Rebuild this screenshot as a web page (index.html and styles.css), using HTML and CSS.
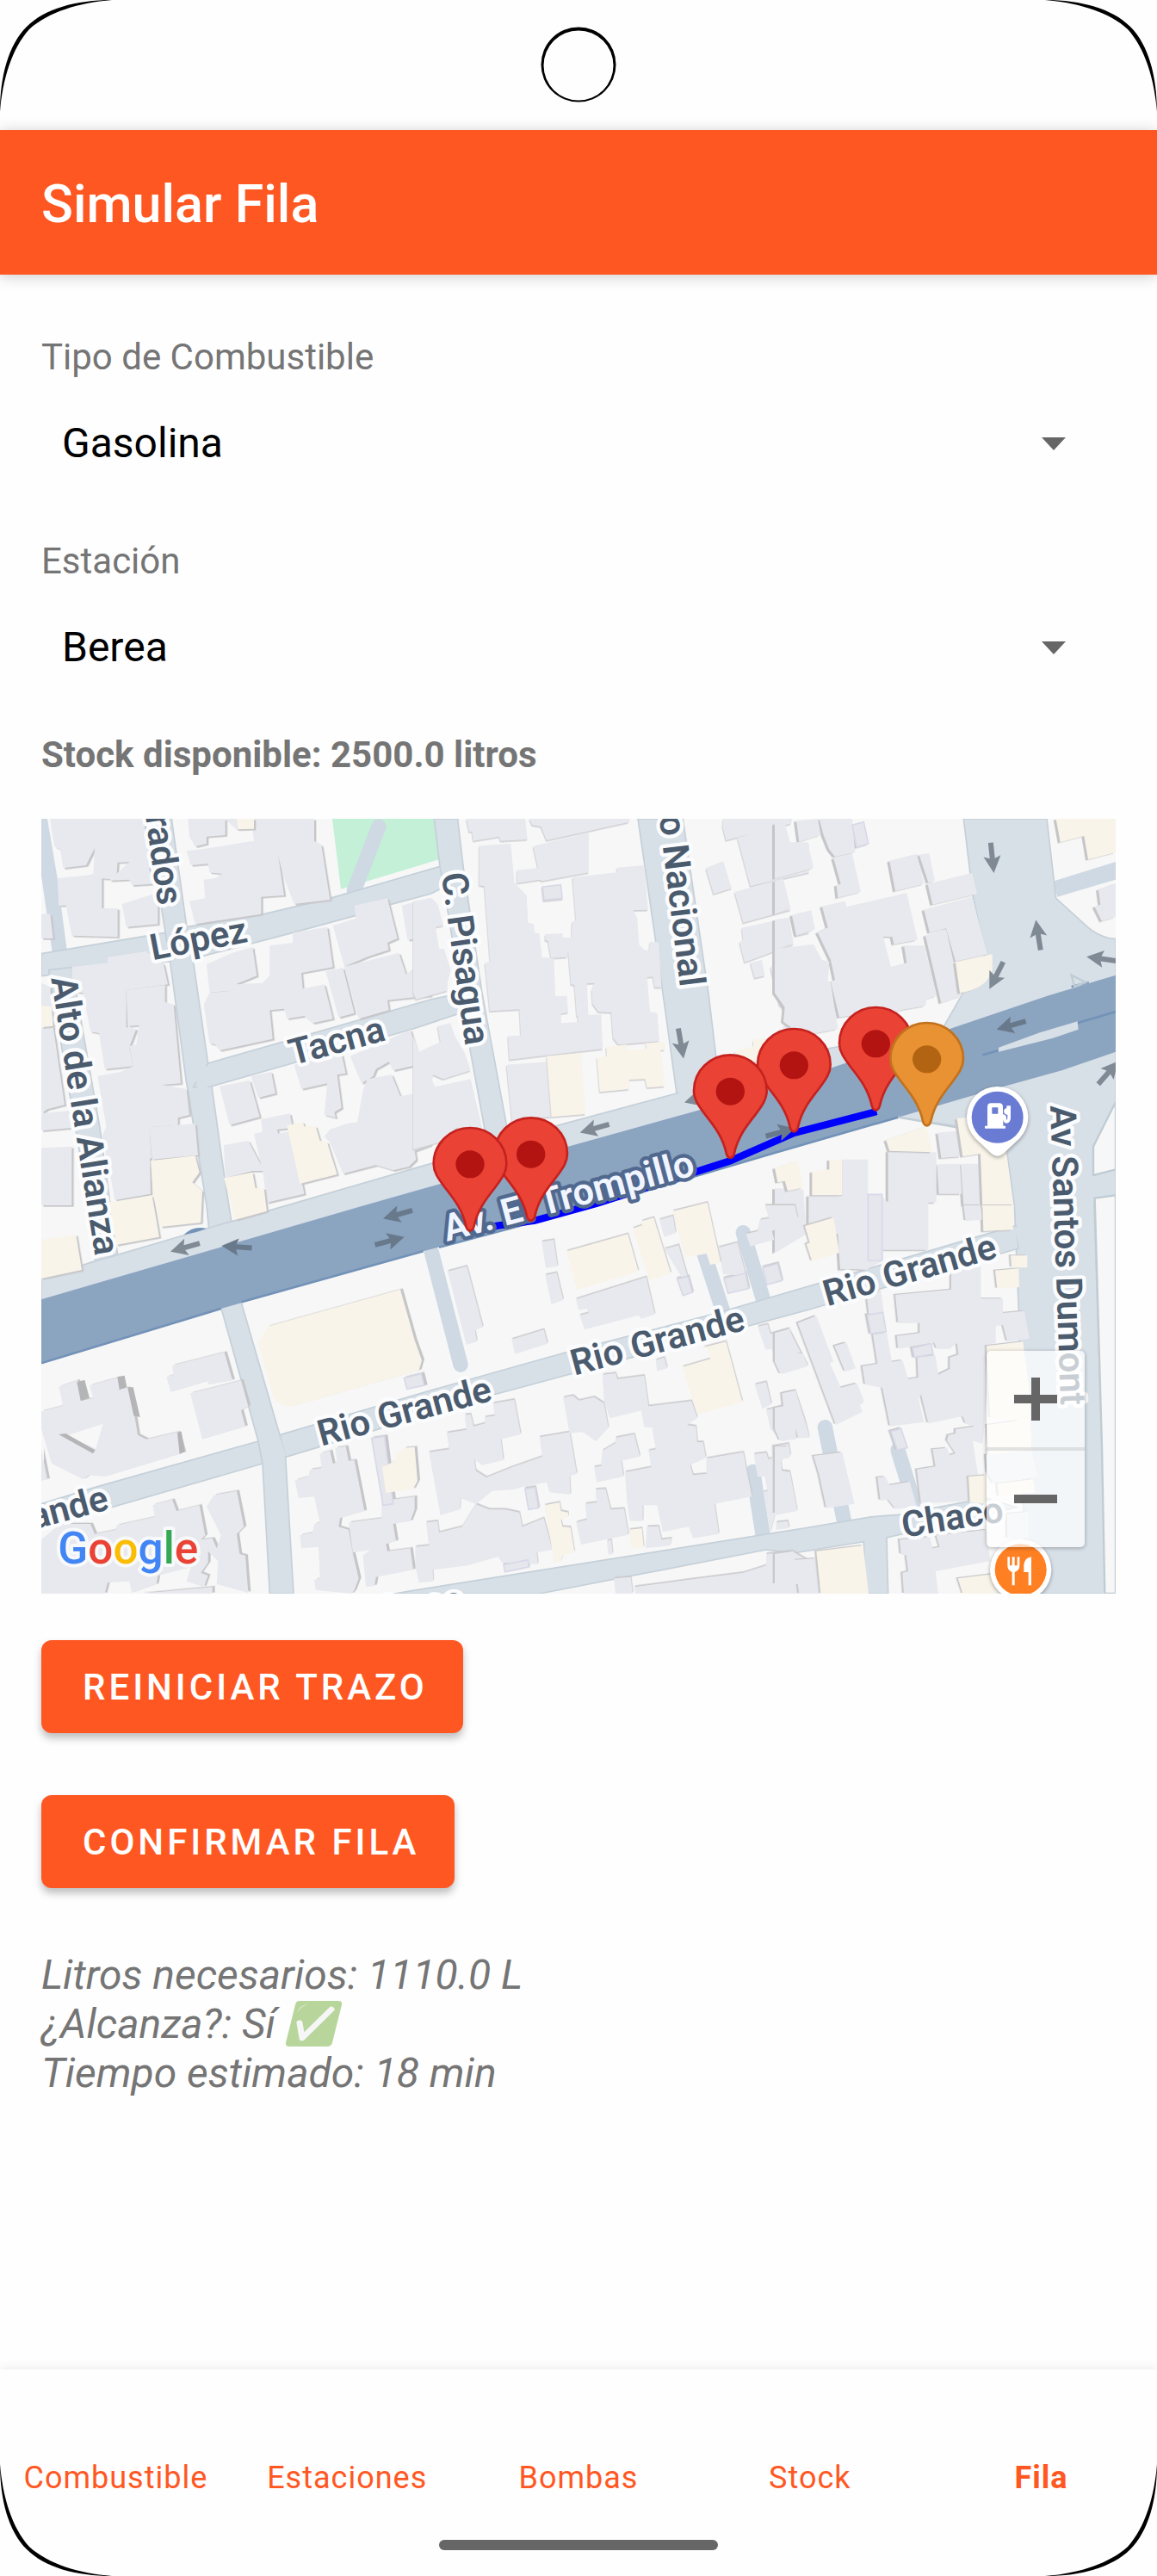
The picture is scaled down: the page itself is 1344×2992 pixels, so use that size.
FILE: index.html
```html
<!DOCTYPE html>
<html lang="es">
<head>
<meta charset="utf-8">
<meta name="viewport" content="width=device-width, initial-scale=1">
<title>Simular Fila</title>
<link rel="stylesheet" href="styles.css">
</head>
<body>
<div class="screen">
  <svg class="corner corner-tl" viewBox="0 0 130 130" aria-hidden="true"><path d="M0 130C0 88 10 52 31 31C52 10 88 0 130 0C92 3 56 14 34 34C14 56 3 92 0 130z"/></svg>
  <svg class="corner corner-tr" viewBox="0 0 130 130" aria-hidden="true"><path d="M0 130C0 88 10 52 31 31C52 10 88 0 130 0C92 3 56 14 34 34C14 56 3 92 0 130z"/></svg>
  <svg class="corner corner-bl" viewBox="0 0 130 130" aria-hidden="true"><path d="M0 130C0 88 10 52 31 31C52 10 88 0 130 0C92 3 56 14 34 34C14 56 3 92 0 130z"/></svg>
  <svg class="corner corner-br" viewBox="0 0 130 130" aria-hidden="true"><path d="M0 130C0 88 10 52 31 31C52 10 88 0 130 0C92 3 56 14 34 34C14 56 3 92 0 130z"/></svg>

  <div class="status-bar">
    <svg class="camera" viewBox="0 0 176 176" aria-hidden="true"><path fill-rule="evenodd" d="M88 1a87 87 0 1 0 0 174a87 87 0 1 0 0-174zM88 9a81 81 0 1 1 0 162a81 81 0 1 1 0-162z"/></svg>
  </div>

  <header class="app-bar"><h1 class="app-title">Simular Fila</h1></header>

  <main class="content">
    <div class="field">
      <label class="field-label" for="tipo">Tipo de Combustible</label>
      <div class="spinner">
        <select id="tipo" class="spinner-select"><option>Gasolina</option></select>
        <svg class="spinner-arrow" viewBox="0 0 28 15" aria-hidden="true"><path d="M0 0h28L14 15z"/></svg>
      </div>
    </div>
    <div class="field">
      <label class="field-label" for="estacion">Estación</label>
      <div class="spinner">
        <select id="estacion" class="spinner-select"><option>Berea</option></select>
        <svg class="spinner-arrow" viewBox="0 0 28 15" aria-hidden="true"><path d="M0 0h28L14 15z"/></svg>
      </div>
    </div>
    <p class="stock">Stock disponible: 2500.0 litros</p>

    <div class="map">
      <svg class="map-canvas" viewBox="0 0 3744 2700" role="img" aria-label="Mapa de la fila en Av. El Trompillo">
        <defs>
          <path id="arrow" d="M-53-9H2L-6-30L53 0L-6 30L2 9H-53z"/>
          <g id="pin">
            <path d="M0 231C-10 231-12 223-14 215C-26 158-58 118-88 80C-112 48-127 27-127-2A127 125 0 0 1 127-2C127 27 112 48 88 80C58 118 26 158 14 215C12 223 10 231 0 231z" stroke-width="8"/>
          </g>
        </defs>

        <!-- park and footpaths -->
        <path class="park" d="M1014 0H1374L1386 142L1044 245z"/>
        <path class="walk" d="M1176 27L1090 250"/>
        <path class="walk" d="M1360 1510L1461 1902"/>
        <path class="walk" d="M2446 1442L2520 1690M2308 1510L2375 1715M2480 2275L2515 2500M2731 2120L2800 2460"/>
        <path class="walk" d="M2985 2200L3040 2380"/>
        <path class="lane" d="M3525 218L3744 150V212L3541 272z"/>
        <path class="lane" d="M0 0H21L56 207L89 457L38 464L0 197z"/>

        <!-- side streets -->
        <g class="street">
          <path d="M0 470L431 397L506 377L776 332L1006 277L1386 167L1450 180L1406 237L1356 262L1216 299L1096 337L876 397L531 487L0 548z"/>
          <path d="M26 527L106 517L204 1077L238 1327L266 1520L191 1560L151 1267L66 767z"/>
          <path d="M378 0H454L506 372L531 507L581 852L594 932L641 1267L666 1425L586 1450L576 1347L504 907L446 477L421 327z"/>
          <path d="M581 852L1356 630L1461 607L1500 660L1461 677L1296 732L594 932L530 935z"/>
          <path d="M1369 0H1451L1471 172L1536 607L1623 1077L1640 1200L1550 1220L1546 1087L1491 787L1406 257L1389 167z"/>
          <path d="M2079 0H2236L2266 207L2326 617L2351 827L2366 960L2200 1010L2214 957L2141 427z"/>
          <path d="M3214 0H3504L3536 277L3646 377Q3690 415 3744 419V987L3666 1142V1242L3744 1222V1312L3671 1322L3669 1347L3696 2187L3706 2700H3430L3406 1712L3391 1347L3366 1167L3196 1072L2986 1040L3146 722L3206 617L3290 470L3246 267z"/>
          <path d="M0 1602L191 1540L266 1519L586 1425L666 1402L1356 1202L1786 1072L2214 957L2736 802L3146 722L3206 950L0 1760z"/>
          <path d="M0 2387L196 2327L756 2169L831 2147L1356 1992L1836 1857L2356 1722L3396 1417L3406 1497L2676 1710L1576 2007L851 2224L771 2247L0 2470z"/>
          <path d="M626 1702L696 1682L831 2147L851 2224L879 2700H796L771 2247L756 2169z"/>
          <path d="M1296 2689L2676 2469L2896 2432L2986 2425L3291 2367L3400 2400L2946 2505L2951 2700H2871L2866 2519L2621 2559L2526 2547L1736 2700H1230z"/>
        </g>
        <!-- crossings without kerb lines -->
        <path class="median" d="M452 400L508 385L526 488L462 500zM535 870L588 860L598 925L545 950zM770 2173L832 2155L852 2220L780 2240zM1412 200L1470 185L1478 250L1420 250zM1455 615L1532 600L1540 660L1480 690zM592 1425L662 1408L670 1450L600 1460zM1556 1130L1620 1115L1630 1160L1562 1170zM2218 930L2358 900L2366 990L2226 990zM3392 1425L3460 1405V1500L3408 1495zM3210 640L3300 480L3400 700L3200 740z"/>
        <path class="block" d="M3744 987L3666 1142V1242L3744 1222zM3671 1322L3744 1312V2700H3706L3696 2187z"/>

        <!-- avenue -->
        <path class="avenue" d="M0 1675L226 1609L1126 1347L1356 1282L1836 1142L2286 1017L2756 867L3166 732L3506 617L3744 545V812L3556 877L3356 932L2986 1040L2556 1164L1936 1347L1331 1507L626 1707L0 1897z"/>
        <path class="avenue-edge" d="M0 1897L626 1707M698 1684L1331 1507M1386 1493L1936 1347L2556 1164L2986 1040M3280 823L3335 808M3590 585L3650 570M3611 712L3744 672"/>
        <path class="avenue-spot" d="M496 1450Q530 1416 576 1428L540 1440z"/>
        <path class="median" d="M3336 797L3480 745L3611 706L3614 734L3526 764L3336 812z"/>
        <path class="street-line" d="M2986 1040L3190 1075"/>
        <path class="street-line" d="M3590 545L3640 570L3600 584z"/>

        <!-- tile 1: north west blocks -->
        <g class="buildings shade-se" transform="translate(-24 -33)">
          <path d="M55 33H380L400 180L290 185L285 245L165 235L205 225L210 135L180 195L100 205L90 140L70 130L60 75z"/>
          <path d="M80 240L235 225V345H290V445L130 440L110 335H85zM335 180L395 180L410 260L340 265L330 245L260 248zM305 330L430 290V400L320 410zM24 365H55L65 450H24z"/>
          <path d="M535 33H665V90L600 95V120L560 130L540 95zM665 33H975V110L1000 125L1030 315L905 330L870 240L850 165L770 170L760 65L705 70z"/>
          <path d="M530 145L610 135L760 110L850 165L870 300L790 305V365L560 400L540 320L595 310L590 245L630 240L655 225L610 220L605 190L545 195z"/>
          <path d="M130 550L255 535V515L390 495L450 540L465 610L320 630L320 760L355 765L330 830L345 895L245 905L225 780L195 775L170 640L135 635z"/>
          <path d="M320 630L455 612V672L485 680L510 955L445 960L530 975L540 1065L500 1075V1100L400 1108L408 1215L275 1250L220 930L300 915L345 895L330 825L355 820L365 750H400L325 755z"/>
          <path d="M400 1108L560 1095L570 1205L410 1220zM250 1108L400 1108L405 1340L280 1362L260 1250L235 1140zM24 760L65 755L105 1030L45 1045L24 1060zM24 1060L120 1050L130 1110L24 1120zM24 1180L130 1175L130 1380H24zM24 605L55 620L60 690H24z"/>
          <path d="M600 540L690 500L760 480L775 580L705 608L710 630L610 638zM820 475L900 465V430L1020 410L1040 550L930 570L935 625L1010 610L1040 730L970 745L940 720L880 730L870 695L820 700L830 800L740 820L645 840L630 820L610 815L590 680L610 640L705 630V610L795 605L820 580z"/>
          <path d="M1040 405L1120 380L1115 335L1230 310L1265 450L1230 465L1235 490L1165 512L1080 548zM1280 335L1380 308V445L1300 455zM1015 565L1075 552L1115 710L1060 725zM1080 548L1270 500L1295 575L1380 510V650L1325 655L1230 665L1235 700L1130 730z"/>
          <path d="M645 965L750 945L785 1072L680 1100zM755 930L825 915L840 990L780 1005zM905 890L1070 850L1085 920L1055 925L1070 1040L1045 1055L1050 1075L1010 1065L1020 955L930 975zM1100 860L1310 768L1335 850L1380 840V880L1250 910L1235 880L1190 905L1180 930L1140 955z"/>
          <path d="M1160 940L1245 925L1275 1000L1355 985L1380 1100V1170L1325 1190L1330 1220L1305 1245L1250 1258L1190 1240L1075 1270L1030 1160L1010 1140L1030 1115L1090 1095L1125 1090L1145 980z"/>
          <path d="M765 1130L845 1115L850 1130L900 1120L940 1340L810 1370L795 1260L760 1260L665 1285L660 1170L745 1155L790 1240zM790 1080L890 1060L900 1110L850 1115L795 1130z"/>
        </g>
        <g class="shops shade-se" transform="translate(-24 -33)">
          <path d="M705 33H765V68L710 70zM24 685L60 688L65 755L24 760zM405 1225L560 1207L575 1265L550 1300L585 1330L580 1440L440 1455L415 1350zM260 1370L410 1345L435 1490L285 1518zM660 1285L760 1265L770 1320L800 1320L810 1400L700 1430zM880 1102L935 1090L940 1105L980 1105L995 1155L1020 1160L1055 1272L925 1305zM24 1500L145 1482L165 1605L24 1635z"/>
        </g>

        <!-- tile 2: north centre blocks -->
        <g class="buildings shade-s" transform="translate(1296 -33)">
          <path d="M185 33H390L398 105L305 110L300 95L210 110L205 78H195zM405 33H755L750 45L465 108L445 60L415 55zM418 128L612 80V220L530 235L450 250L440 245L362 257V212L435 205z"/>
          <path d="M230 127L340 120L352 255L395 300L400 395L420 400L422 430L440 432L448 515L490 520L495 650L535 650L540 708L515 712V745L575 742L573 718L655 715L660 835L585 843L335 872L330 790L375 788L370 697L267 703L250 535L268 532L248 268L230 265z"/>
          <path d="M555 237L710 220V203L805 195L818 350L765 352L780 375L787 472L805 490L822 492L825 462L855 462L865 620L842 620L835 583L815 585L825 705L850 710L857 808L715 820L697 797L690 708L645 705L625 677L622 630L632 605L605 607L610 718L570 720L562 612L550 610L540 495L535 515L480 518L470 460L460 455V435L520 432V447L552 447L553 392L567 387z"/>
          <path d="M325 890L465 880L482 1072L430 1075L345 1090z"/>
          <path d="M0 320L65 310L85 330L105 405L78 410L90 485L108 487L130 560L120 595L118 632L10 662L0 640zM85 755L130 745L145 790L180 850L200 910L105 940L70 925L65 940L75 967L200 940L240 1110L150 1110L90 1160L0 1185V790L20 845L95 810zM0 885L45 877L55 915L0 930z"/>
          <path d="M1080 33H1320L1315 50L1090 108L1078 60zM1130 100L1295 50L1315 120L1340 115L1380 120V220L1175 268zM1020 205L1080 180L1110 275L1047 295zM1120 288L1285 243L1315 350L1150 395zM1145 413L1310 377L1325 470L1155 533L1137 462L1150 455zM1315 370L1380 355V430L1330 442zM1175 535L1215 525L1225 580L1190 588zM1245 550L1380 475V780L1290 770L1300 730L1285 690L1275 680z"/>
          <path class="outline" d="M451 270L514 263L519 310L456 316z"/>
        </g>
        <g class="shops shade-s" transform="translate(1296 -33)">
          <path d="M465 860L583 850L600 1062L482 1072zM672 828L742 820L745 840L812 835V815L875 810V838L862 840L875 965L815 970L808 940L752 942V975L650 985L640 865L675 860zM1118 843L1185 825V803L1245 795L1235 860L1140 900z"/>
        </g>

        <!-- tile 3: north east blocks -->
        <g class="buildings shade-sw" transform="translate(2556 -33)">
          <path d="M0 50L35 45L45 115L115 115L135 205L0 242zM75 40L150 33L160 90L85 113zM155 33H270L280 150L210 165L190 140L170 90zM205 170L270 155L300 288L220 308L215 265L230 260zM0 250L30 243L55 345L0 365zM60 370L127 352L140 418L75 440z"/>
          <path d="M400 180L495 155L520 260L420 285zM503 158L538 153L558 250L535 255zM533 260L688 222L705 295L550 332zM520 350L688 305L740 505L630 530L597 415L540 430zM525 440L597 418L650 650L580 675zM165 338L245 320L250 340L460 292L498 455L415 470L410 445L378 443L405 550L460 535L450 475L520 475L565 650L530 660L525 685L440 700L375 720L350 705L225 725L195 600L210 595L195 525L150 430L185 412z"/>
          <path d="M0 385L45 377L65 465L15 485L135 470L165 525L190 530L185 600L195 605L220 765L100 790L30 740L35 690L0 640zM1128 280L1188 258V375L1140 390L1115 340L1135 332z"/>
          <path d="M568 1127L645 1120L650 1210L580 1215zM395 1190L563 1195V1370H395zM565 1237L645 1235L652 1340H572zM648 1235L710 1235L718 1380H658zM235 1220H325V1345L375 1350L390 1367L535 1370V1535H378V1570L320 1605L290 1603H228L220 1480L118 1470V1345L235 1348zM0 1320L100 1325L110 1480L0 1545z"/>
          <path class="outline" d="M270 55L310 44L326 120L285 132z"/>
          <path class="outline" d="M325 1342H374V1572H325z"/>
        </g>
        <g class="shops shade-sw" transform="translate(2556 -33)">
          <path d="M980 33H1188V150L1092 175L1078 93L995 115zM630 533L758 505V560Q740 625 645 640zM388 1153L528 1103L550 1195L400 1190zM635 1077L710 1070L718 1200L655 1210zM715 1150L805 1180L830 1380V1465L727 1470zM0 1250L80 1225L100 1318L45 1330L35 1295L10 1300zM130 1262L190 1255V1220L235 1220V1345H130z"/>
        </g>

        <!-- tile 4: south west blocks -->
        <g class="buildings shade-ne" transform="translate(-24 1347)">
          <path d="M85 632L150 610L165 680L205 672L192 628L290 600L300 640L325 635L350 740L360 800L390 815L500 790L520 862L245 945L190 940L170 955L60 900L24 780V718L100 698zM480 558L662 512L690 610L605 625L605 612L475 650L460 598L485 590zM543 655L720 610L745 700L720 715L735 770L585 815zM24 850L45 955L24 960z"/>
          <path d="M412 1045L480 1025L495 1065L575 1045L595 1150L580 1165L620 1160L635 1195L650 1150L600 1050L625 1010L705 995L730 1120L705 1145L715 1215L735 1220L745 1350L635 1320L640 1240L605 1205V1245L580 1280L605 1290L590 1330L530 1310L545 1260L430 1290L425 1320L340 1350L330 1310L255 1315L245 1353H24V1165L90 1110L195 1110L210 1145L285 1130V1115L420 1085z"/>
          <path d="M908 958L955 945L960 920L1000 915L995 865L1030 855L1040 900L1055 895L1048 845L1085 840L1095 890L1115 888L1150 1065L1065 1090L1060 1120L1095 1130L1110 1215L1130 1300L1115 1340L1105 1353L980 1340L975 1305L995 1300L990 1190L930 1195L925 1150L970 1140L975 1110L995 1105L975 1015L920 1020zM1095 1105L1210 1090V1030L1325 1015V1060L1310 1100L1250 1110L1260 1170L1225 1180L1230 1205L1310 1195L1320 1270L1190 1295L1185 1325L1155 1330L1145 1220L1170 1200L1110 1210zM370 1353L620 1330V1353z"/>
          <path class="outline" d="M1175 812L1220 805L1250 1040L1215 1045zM1288 602L1348 587L1358 627L1298 640z"/>
        </g>
        <g class="shops shade-ne" transform="translate(-24 1347)">
          <path d="M812 422L1275 293L1325 470L1350 540L1340 575L890 702Q840 695 830 660L780 480zM1212 912L1258 890V870L1290 845L1325 842L1335 960L1320 988L1225 1002z"/>
        </g>
        <path class="hollow" d="M85 2150L215 2108L190 2195z"/>
        <path class="wall" d="M60 2145L85 2142L188 2200L180 2212z"/>
        <path class="wall" d="M124 1963L151 1955L168 2019L137 2028zM265 1945L290 1940L298 1980L272 1990zM301 1982L320 1980L344 2085L322 2080zM474 2140L488 2135L500 2205L482 2214z"/>

        <!-- tile 5: south centre blocks -->
        <g class="buildings shade-n" transform="translate(1296 1347)">
          <path d="M120 230L187 212L243 425L215 435L222 475L185 486zM448 127L490 120L503 212L462 218zM460 243L500 235L523 330L482 345zM343 467L455 433L468 482L355 518zM567 327L812 250L842 380L795 395L785 383L597 433L580 383L612 375L605 360L577 365zM858 50L905 37L915 97L875 110zM875 152L925 138L955 245L935 250zM1063 147L1130 130L1160 245L1080 240zM1160 100L1200 90L1210 50L1240 45L1225 0L1330 0L1340 45L1250 90L1258 120L1175 143z"/>
          <path d="M845 540L875 530L885 568L850 578zM1200 422L1235 415L1245 448L1308 430L1375 560L1285 588L1248 500L1228 503zM1190 625L1230 615L1248 692L1217 710zM1285 655L1330 645L1365 750L1380 810L1345 810L1333 775L1335 810L1285 823L1245 780L1230 713L1290 698zM1340 412L1380 398V520z"/>
          <path d="M523 670L557 663L577 680L630 668L665 690L680 775L637 822L590 790L545 795zM660 590L705 585L712 605L805 593L820 700L970 682L990 740L955 765L985 770L990 825L1010 825L1020 880L965 905L975 940L1022 935V882L1150 860L1180 1015L1050 1040L1065 1145L975 1160L960 1120L870 1138L850 1045L800 1045V1100H755L745 1030L738 930L830 912L820 855L845 850L833 775L805 773L795 715L685 742L665 680z"/>
          <path d="M440 808L545 790L570 935L545 945L548 1008L475 1000L465 965L385 980L350 990L275 995L220 1040L170 1120L90 1140L85 1100L45 1105L55 1185L8 1190V1260L20 1315L70 1310L68 1270L190 1255L295 1225L310 1245L435 1250L430 1210L485 1200L455 1090L380 1120L370 1070L320 1060L265 1060L165 1020L163 1060L95 1080L55 860L125 850L117 793L185 782L180 730L200 728L210 770L250 760V738L285 733L278 690L352 677L375 798L305 815L315 888L240 905L212 885L218 925L255 948L345 912L450 875z"/>
          <path d="M660 855L705 828V810L770 797L790 875L725 890L733 945L640 965L630 912L655 908zM635 990L670 988L688 1060L735 1057L750 1148L585 1182L568 1105L605 1095L600 1040L640 1035zM815 1120L855 1118L865 1165L900 1160L895 1185L810 1195zM675 1170L690 1165L695 1215L680 1217z"/>
          <path d="M1187 867L1230 862L1238 885L1250 880L1248 840L1308 830L1315 872L1280 890L1285 925L1312 928L1338 1065L1260 1080L1245 1140L1220 1000L1235 995L1225 945L1200 945zM700 1300L758 1295L765 1353H705zM770 1330L955 1305L1150 1280L1230 1255V1215L1320 1205L1380 1240V1353H775zM1265 1105L1305 1100L1310 1125L1265 1130z"/>
          <path class="outline" d="M920 257L958 248L973 303L940 314zM1083 255L1158 237L1169 290L1097 307zM1218 217L1270 203L1285 262L1232 277zM390 988L424 983L437 1054L402 1060zM315 1252L400 1235L403 1260L320 1277z"/>
        </g>
        <g class="shops shade-n" transform="translate(1296 1347)">
          <path d="M535 160L748 100L785 230L570 295zM765 80L797 70V55L838 43L898 237L823 260zM905 20L1025-10L1072 200L1035 207L1022 168L948 182zM938 563L1035 535L1028 500L1010 495L1090 475L1147 685L990 730zM458 1045L510 1035L515 1065L540 1070V1085L515 1095L520 1120L548 1122L562 1208L520 1220L515 1240L492 1245zM753 1130L797 1125L803 1192L762 1197z"/>
        </g>

        <!-- tile 6: south east blocks -->
        <g class="buildings shade-nw" transform="translate(2556 1347)">
          <path d="M658 0H718L722 50L665 55zM80 410L145 385L205 545L192 550L230 635L287 620L312 685L297 695L305 720L213 765zM0 445L52 430L80 515L98 517L115 560L20 588L0 545zM208 490L250 478L282 568L245 580zM322 330L370 295L380 375L328 378zM342 450L390 443L408 545L358 552zM305 560L445 540L465 605L500 600L497 530L560 522L570 590L610 570V530L640 520L635 480L610 500H565L555 478L430 500L425 455L505 445V410H430L420 312L615 293V212H718V325H795V375L870 368L887 465L810 475L795 417L770 420V480L740 485V640L725 830L690 820L705 920L720 980L680 940L675 1030L510 1040L495 920L560 910L550 850L600 845L610 870L630 865L600 820L605 800L630 795V780L695 770L665 760L655 735L535 760L510 660L500 670L520 755L402 770L375 635L315 625z"/>
          <path d="M135 873L235 860L278 1040L180 1055L155 940zM358 948L385 945L400 975L470 963L495 1050L420 1058L395 1025L368 1028zM25 655L72 645L100 740L122 808L82 812L72 775L75 815L18 820L0 780V705L30 700zM0 840H48L52 880L20 885L25 925L52 930L78 1060L0 1075zM0 1215L65 1205L70 1235L145 1230L160 1353H85L80 1320H0zM435 1165L540 1155L550 1195L575 1190L562 1150L740 1130L750 1240L560 1275L570 1353H450L445 1280L465 1275L458 1220L440 1215zM735 870L895 850L915 945L760 970L740 930zM810 1075L885 1068V1160H810z"/>
          <path class="outline" d="M323 382L377 373L388 440L335 447zM405 788L440 778L462 845L427 852zM480 497L545 482L552 518L487 530z"/>
        </g>
        <g class="shops shade-nw" transform="translate(2556 1347)">
          <path d="M105 72L205 43L225 165L130 195L110 135L122 130zM722 0H833V5L725 10zM822 175H880V217H825zM768 227L850 220L852 285L775 290zM738 490L865 475L887 650L890 750L895 850L745 870L740 765L850 750L750 740zM775 970L900 955L908 1000L780 1015zM675 945L738 940V1040L680 1035zM145 1205L308 1185L327 1353H160zM638 1300L760 1285L770 1353H655z"/>
        </g>

        <!-- queue line -->
        <path class="route" d="M1494 1442L1590 1418L1720 1400L1936 1340L2401 1192L2623 1095L2911 1020"/>

        <!-- one way arrows -->
        <g class="arrows">
          <use href="#arrow" transform="translate(1928 1079) rotate(164)"/>
          <use href="#arrow" transform="translate(2229 783) rotate(80)"/>
          <use href="#arrow" transform="translate(2292 974) rotate(164)"/>
          <use href="#arrow" transform="translate(501 1494) rotate(164)"/>
          <use href="#arrow" transform="translate(3314 136) rotate(84)"/>
          <use href="#arrow" transform="translate(3474 405) rotate(261)"/>
          <use href="#arrow" transform="translate(3328 546) rotate(117)"/>
          <use href="#arrow" transform="translate(3695 488) rotate(188)"/>
          <use href="#arrow" transform="translate(3718 885) rotate(311)"/>
        </g>
        <g class="arrows arrows-avenue">
          <use href="#arrow" transform="translate(2576 1092) rotate(345)"/>
          <use href="#arrow" transform="translate(681 1492) rotate(184)"/>
          <use href="#arrow" transform="translate(1242 1379) rotate(164)"/>
          <use href="#arrow" transform="translate(1214 1471) rotate(345)"/>
          <use href="#arrow" transform="translate(3380 720) rotate(164)"/>
        </g>

        <!-- street names -->
        <g class="names">
          <text transform="translate(388 493) rotate(-11)">López</text>
          <text transform="translate(876 859) rotate(-15)">Tacna</text>
          <text transform="translate(407 304) rotate(82)" text-anchor="end">rados</text>
          <text transform="translate(34 556) rotate(81)">Alto de la Alianza</text>
          <text transform="translate(1394 193) rotate(82)">C. Pisagua</text>
          <text transform="translate(2226 588) rotate(83)" text-anchor="end">o Nacional</text>
          <text transform="translate(3516 1000) rotate(88)">Av Santos Dumont</text>
          <text transform="translate(976 2186) rotate(-15)">Rio Grande</text>
          <text transform="translate(1858 1940) rotate(-15)">Rio Grande</text>
          <text transform="translate(2739 1699) rotate(-16)">Rio Grande</text>
          <text transform="translate(240 2405) rotate(-15)" text-anchor="end">ande</text>
          <text transform="translate(3005 2504) rotate(-9)">Chaco</text>
          <text transform="translate(1478 2759) rotate(-9)" text-anchor="end">Chaco</text>
          <text class="avenue-name" transform="translate(1413 1473) rotate(-15)">Av. El Trompillo</text>
        </g>

        <!-- places -->
        <g transform="translate(3332 1040)">
          <path class="poi" d="M0 135C-12 135-20 128-30 118L-78 73A107 107 0 1 1 78 73L30 118C20 128 12 135 0 135z"/>
          <circle r="90" fill="#6a7bd4"/>
          <path fill="#fff" fill-rule="evenodd" d="M-44 39V30H-35V-36Q-35-49-22-49H6Q19-49 19-36V-10Q31-10 31 4V10Q35 8 35 2V-8Q22-10 22-22Q24-31 32-32V-40H46V4Q44 21 31 21Q21 20 20 6V30H28V39zM-19-34V-12H2V-34z"/>
        </g>
        <g transform="translate(3413 2617)">
          <circle class="poi" r="107"/>
          <circle r="90" fill="#ff8022"/>
          <path fill="#fff" d="M-46-45h8v30h8v-30h9v30h9v-30h8v30q0 18-17 23v46h-9v-46q-16-5-16-23zM37-45v99h-10V8H11v-25q2-24 26-28z"/>
        </g>

        <!-- markers -->
        <g class="pins">
          <use href="#pin" x="2908" y="784"/>
          <use href="#pin" x="2623" y="859"/>
          <use href="#pin" x="2401" y="950"/>
          <use href="#pin" x="1706" y="1169"/>
          <use href="#pin" x="1494" y="1204"/>
        </g>
        <g class="pin-dots">
          <ellipse cx="2908" cy="784" rx="50" ry="48"/>
          <ellipse cx="2623" cy="859" rx="50" ry="48"/>
          <ellipse cx="2401" cy="950" rx="50" ry="48"/>
          <ellipse cx="1706" cy="1169" rx="50" ry="48"/>
          <ellipse cx="1494" cy="1204" rx="50" ry="48"/>
        </g>
        <use class="pin-station" href="#pin" x="3086" y="838"/>
        <ellipse cx="3086" cy="838" rx="50" ry="48" fill="#b36412"/>

        <text class="logo" x="58" y="2594"><tspan fill="#4285f4">G</tspan><tspan fill="#ea4335">o</tspan><tspan fill="#fbbc04">o</tspan><tspan fill="#4285f4">g</tspan><tspan fill="#34a853">l</tspan><tspan fill="#ea4335">e</tspan></text>
      </svg>
      <div class="zoom">
        <button class="zoom-btn" type="button" aria-label="Acercar"><svg viewBox="0 0 50 50" aria-hidden="true"><path d="M20 0h10v20h20v10H30v20H20V30H0V20h20z"/></svg></button>
        <button class="zoom-btn" type="button" aria-label="Alejar"><svg viewBox="0 0 50 50" aria-hidden="true"><path d="M0 20h50v10H0z"/></svg></button>
      </div>
    </div>

    <div class="actions">
      <button class="action" type="button">REINICIAR TRAZO</button>
      <button class="action" type="button">CONFIRMAR FILA</button>
    </div>

    <p class="result">Litros necesarios: 1110.0 L<br>¿Alcanza?: Sí <svg class="check" viewBox="0 0 65 60" preserveAspectRatio="none" role="img" aria-label="correcto"><path fill="#b8d69b" d="M16 0H61Q66 0 65 5L54 55Q53 60 48 60H4Q-1 60 0 55L11 5Q12 0 16 0z"/><path fill="#cde3b7" d="M13 16Q15 5 26 4Q18 8 13 16z"/><path fill="none" stroke="#f6f6f6" stroke-width="7" stroke-linecap="round" stroke-linejoin="round" d="M16 29L19 49L53 11"/></svg><br>Tiempo estimado: 18 min</p>
  </main>

  <nav class="bottom-nav">
    <div class="tabs">
      <a class="tab" href="#combustible">Combustible</a>
      <a class="tab" href="#estaciones">Estaciones</a>
      <a class="tab" href="#bombas">Bombas</a>
      <a class="tab" href="#stock">Stock</a>
      <a class="tab tab-active" href="#fila" aria-current="page">Fila</a>
    </div>
    <div class="home-handle"></div>
  </nav>
</div>
</body>
</html>
```
FILE: styles.css
```css
* {
  box-sizing: border-box;
}

body {
  margin: 0;
  background: #fefefe;
  color: #757575;
  font-family: Roboto, "Liberation Sans", sans-serif;
}

.screen {
  position: relative;
  display: flex;
  flex-direction: column;
  min-height: 100vh;
}

/* rounded outline of the device */
.corner {
  position: absolute;
  width: 130px;
  height: 130px;
  pointer-events: none;
}

.corner-tl { top: 0; left: 0; }
.corner-tr { top: 0; right: 0; transform: scaleX(-1); }
.corner-bl { bottom: 0; left: 0; transform: scaleY(-1); }
.corner-br { bottom: 0; right: 0; transform: scale(-1, -1); }

.status-bar {
  display: flex;
  justify-content: center;
  height: 151px;
  padding-top: 31px;
}

.camera {
  width: 88px;
  height: 88px;
}

.app-bar {
  display: flex;
  align-items: center;
  height: 168px;
  padding: 4px 48px 0;
  background: #ff5722;
  box-shadow: 0 2px 16px rgba(0, 0, 0, .2);
}

.app-title {
  margin: 0;
  color: #fff;
  font-size: 61px;
  font-weight: 500;
  line-height: 72px;
}

.content {
  flex: 1;
  padding: 68px 48px 72px;
}

.field {
  margin-bottom: 37px;
}

.field + .field {
  margin-bottom: 25px;
}

.field-label {
  display: block;
  font-size: 42px;
  line-height: 56px;
}

.spinner {
  display: grid;
  align-items: center;
}

.spinner > * {
  grid-area: 1 / 1;
}

.spinner-select {
  width: 100%;
  height: 144px;
  padding: 0 24px;
  border: 0;
  background: transparent;
  appearance: none;
  color: #000;
  font: 400 48px/56px Roboto, "Liberation Sans", sans-serif;
}

.spinner-arrow {
  justify-self: end;
  width: 28px;
  height: 15px;
  margin-right: 58px;
  fill: #666;
  pointer-events: none;
}

.stock {
  margin: 0 0 46px;
  font-size: 42px;
  font-weight: 700;
  line-height: 56px;
}

/* map */
.map {
  position: relative;
  aspect-ratio: 1248 / 900;
  overflow: hidden;
  background: #f7f7f7;
}

.map-canvas {
  display: block;
  width: 100%;
  height: 100%;
}

.park { fill: #c3f0d6; }
.walk { fill: none; stroke: #ced9e3; stroke-width: 52; stroke-linecap: round; }
.lane { fill: #ced9e3; }
.street { fill: #d7dfe7; stroke: #c5d0d8; stroke-width: 5; }
.street-line { fill: none; stroke: #c0ccd4; stroke-width: 7; }
.block { fill: #f7f7f7; stroke: #c0ccd4; stroke-width: 7; }
.avenue { fill: #8ba4c0; }
.avenue-edge { fill: none; stroke: #7292b8; stroke-width: 8; }
.avenue-spot { fill: #7292b8; }
.median { fill: #d7dfe7; }
.buildings { fill: #e8e9ee; }
.shops { fill: #f9f4e9; }
.outline { fill: #e6e7ed; stroke: #d8d9e8; stroke-width: 5; }
.hollow { fill: #f7f7f7; }
.wall { fill: #b5b5b7; }
.shade-se { filter: drop-shadow(7px 5px 0 #c6c6c9); }
.shade-s { filter: drop-shadow(-2px 5px 0 #cfcfd3); }
.shade-sw { filter: drop-shadow(-9px 4px 0 #c6c6c9); }
.shade-ne { filter: drop-shadow(9px -4px 0 #c6c6c9); }
.shade-n { filter: drop-shadow(2px -5px 0 #c9c9cc); }
.shade-nw { filter: drop-shadow(-7px -3px 0 #c9c9cc); }
.route { fill: none; stroke: #00f; stroke-width: 25; }
.arrows { fill: #808a95; }
.arrows-avenue { fill: #69798c; }

.names {
  fill: #4b5b6e;
  stroke: #fbfcfe;
  stroke-width: 26;
  stroke-linejoin: round;
  paint-order: stroke;
  font-size: 126px;
  font-weight: 600;
}

.avenue-name {
  fill: #f1f5ff;
  stroke: #51698f;
  font-size: 130px;
}

.poi {
  fill: #fff;
  filter: drop-shadow(0 5px 6px rgba(0, 0, 0, .35));
}

.pins { fill: #ea4335; stroke: #c5221f; }
.pin-dots { fill: #b31412; }
.pin-station { fill: #e99234; stroke: #c2721c; }

.logo {
  stroke: rgba(255, 255, 255, .7);
  stroke-width: 24;
  stroke-linejoin: round;
  paint-order: stroke;
  font-size: 154px;
  font-weight: 500;
}

.zoom {
  position: absolute;
  right: 36px;
  bottom: 54px;
  display: flex;
  flex-direction: column;
  width: 114px;
  border-radius: 5px;
  background: rgba(255, 255, 255, .7);
  box-shadow: 0 1px 5px rgba(0, 0, 0, .3);
}

.zoom-btn {
  display: flex;
  align-items: center;
  justify-content: center;
  height: 112px;
  padding: 0;
  border: 0;
  background: transparent;
  fill: #666;
}

.zoom-btn + .zoom-btn {
  height: 116px;
  border-top: 4px solid rgba(200, 200, 200, .5);
}

.zoom-btn svg {
  width: 50px;
  height: 50px;
}

.actions {
  display: flex;
  flex-direction: column;
  align-items: flex-start;
  gap: 72px;
  margin: 54px 0 72px;
}

.action {
  height: 108px;
  padding: 2px 41px 0 48px;
  border: 0;
  border-radius: 12px;
  background: #ff5722;
  box-shadow: 0 6px 10px rgba(0, 0, 0, .25);
  color: #fff;
  font: 500 42px/56px Roboto, "Liberation Sans", sans-serif;
  letter-spacing: 4px;
}

.result {
  margin: 0;
  font-size: 48px;
  font-style: italic;
  line-height: 57px;
}

.check {
  width: 65px;
  height: 53px;
  vertical-align: -10px;
}

.bottom-nav {
  padding: 102px 0 30px;
  background: #fefefe;
  box-shadow: 0 0 12px rgba(0, 0, 0, .1);
}

.tabs {
  display: grid;
  grid-template-columns: repeat(5, 1fr);
}

.tab {
  color: #ff5722;
  font-size: 36px;
  letter-spacing: 1px;
  line-height: 48px;
  text-align: center;
  text-decoration: none;
}

.tab-active {
  font-weight: 700;
}

.home-handle {
  width: 324px;
  height: 12px;
  margin: 48px auto 0;
  border-radius: 6px;
  background: #666;
}
```
